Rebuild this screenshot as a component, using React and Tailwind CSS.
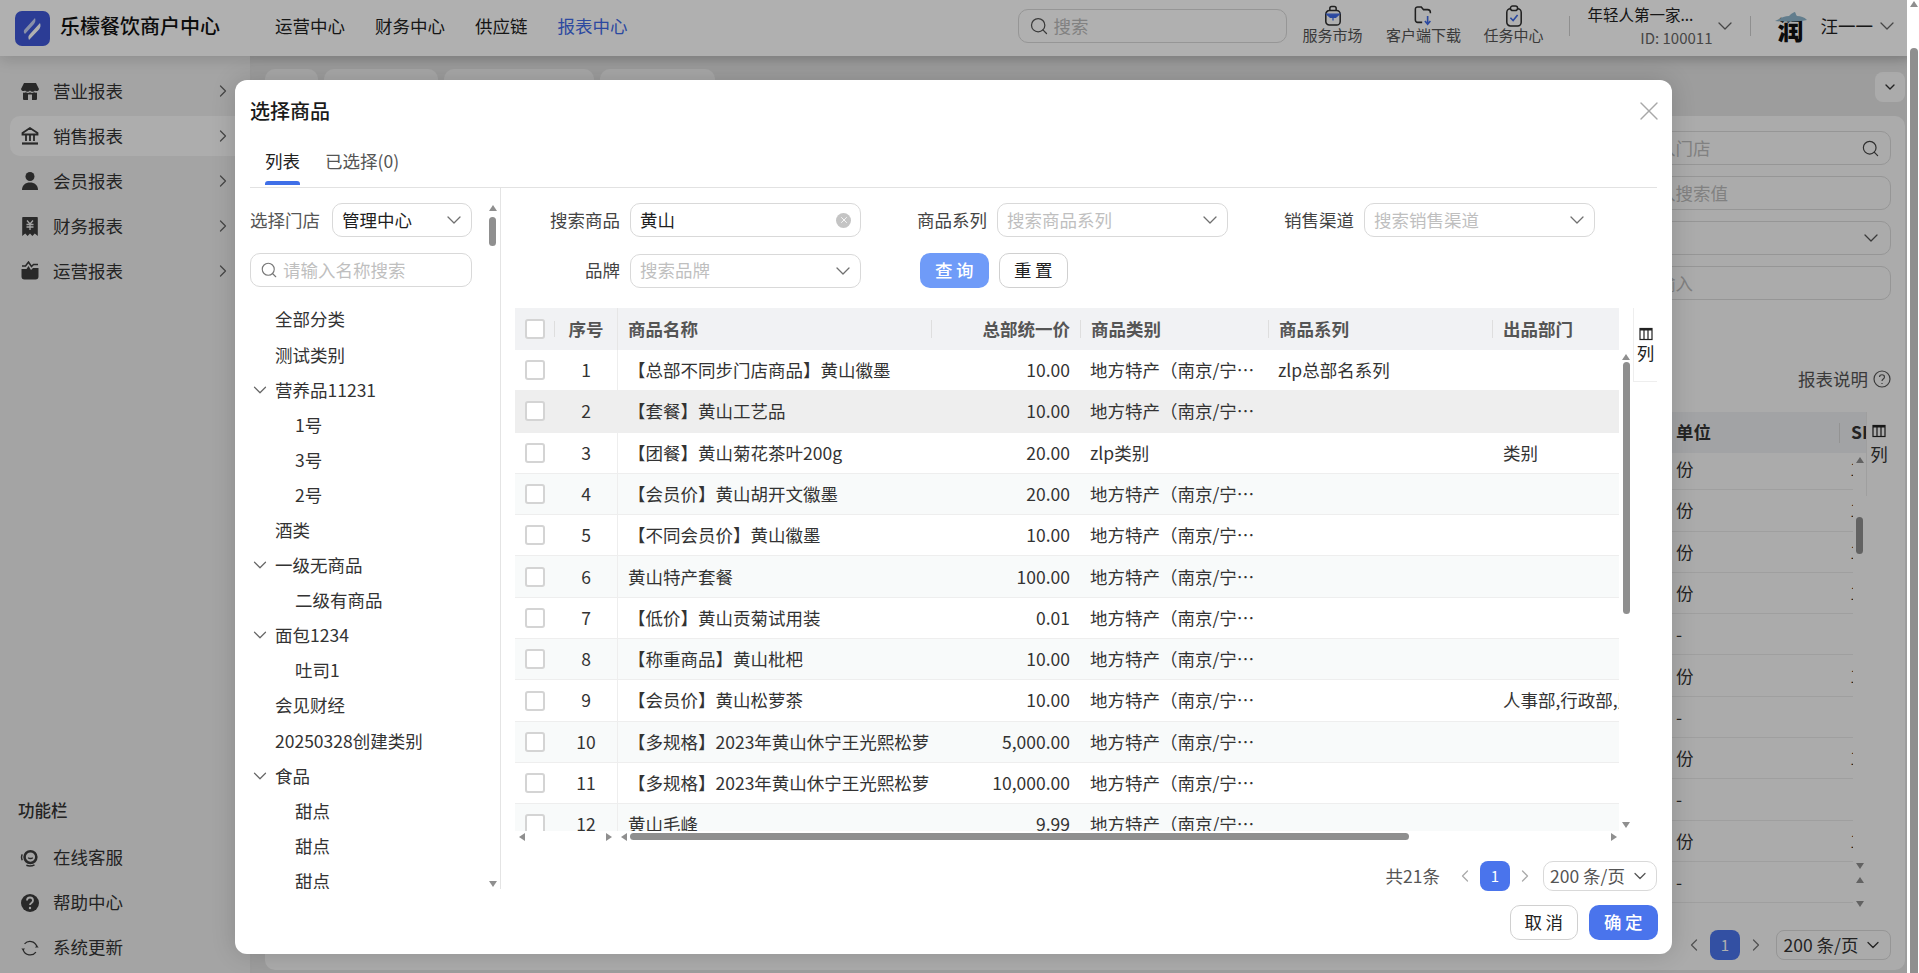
import React from 'react';
import { ChevronDown, ChevronRight, ChevronLeft, Search, X } from 'lucide-react';

const navItems = [
  { label: '运营中心', className: 'ml-[25px]' },
  { label: '财务中心', className: 'ml-[30px]' },
  { label: '供应链', className: 'ml-[30px]' },
  { label: '报表中心', className: 'ml-[30px] text-[#3f6ae8]' },
];

const StoreIcon = () => (
  <svg width="20" height="20" viewBox="0 0 20 20" fill="#3c3c3c">
    <path d="M4 2h12l3 6a2.4 2.4 0 0 1-4 1.4 3 3 0 0 1-5 0 3 3 0 0 1-5 0A2.4 2.4 0 0 1 1 8z" />
    <path d="M3 11.500c1 .4 2 .3 3-.2 1.200.8 2.800.8 4 0 1.200.8 2.800.8 4 0 1 .5 2 .6 3 .2V18a1 1 0 0 1-1 1H4a1 1 0 0 1-1-1z" />
    <rect x="8" y="13.500" width="4" height="5.500" fill="#eee" />
  </svg>
);

const BankIcon = () => (
  <svg width="20" height="20" viewBox="0 0 20 20" fill="none" stroke="#3c3c3c" strokeWidth="1.800">
    <path d="M10 2 2.500 7v1.500h15V7z" />
    <path d="M6 9v6M10 9v6M14 9v6" />
    <path d="M2 17.500h16" strokeWidth="2.200" />
  </svg>
);

const UserIcon = () => (
  <svg width="20" height="20" viewBox="0 0 20 20" fill="#3c3c3c">
    <circle cx="10" cy="5.500" r="4.500" />
    <path d="M2 19c0-5 3.500-7.500 8-7.500s8 2.500 8 7.500z" />
  </svg>
);

const ReceiptIcon = () => (
  <svg width="20" height="20" viewBox="0 0 20 20" fill="#3c3c3c">
    <path d="M3 1h14a.8.8 0 0 1 .8.8V20l-3-2.500-2.400 2.500L10 17.500 7.600 20l-2.400-2.500-3 2.500V1.800A.8.8 0 0 1 3 1z" />
    <path d="M7 4.500 10 8l3-3.500M6.500 8.500h7M6.500 11h7M10 8v6" stroke="#eee" strokeWidth="1.300" fill="none" />
  </svg>
);

const OpsIcon = () => (
  <svg width="20" height="20" viewBox="0 0 20 20" fill="#3c3c3c">
    <path d="M1.500 8h5l2-3 2.500 4 2-2h5.500v8.500a3 3 0 0 1-3 3h-11a3 3 0 0 1-3-3z" />
    <path d="M2 5h3.500L8.500 1l3 4.500L13.500 3.500H18" stroke="#3c3c3c" strokeWidth="1.500" fill="none" />
  </svg>
);

const ServiceIcon = () => (
  <svg width="22" height="20" viewBox="0 0 22 20" fill="none" stroke="#3c3c3c">
    <circle cx="11.500" cy="9" r="6.500" strokeWidth="2.800" />
    <path d="M2.500 6C1.500 8 1.500 10.500 2.500 12.500M7 18c3 1.200 6 1 9-.5" strokeWidth="1.600" />
    <path d="M9 9.500c1 1.400 4 1.400 5 0" strokeWidth="1.400" />
  </svg>
);

const HelpIcon = () => (
  <svg width="20" height="20" viewBox="0 0 20 20">
    <circle cx="10" cy="10" r="9" fill="#3c3c3c" />
    <path d="M7 7.500c0-4 6-4 6 0 0 2.500-3 2.300-3 4.500" stroke="#eee" strokeWidth="1.800" fill="none" />
    <circle cx="10" cy="15" r="1.200" fill="#eee" />
  </svg>
);

const UpdateIcon = () => (
  <svg width="22" height="20" viewBox="0 0 22 20" fill="none" stroke="#3c3c3c" strokeWidth="1.400">
    <path d="M5 5.500A8 8 0 0 1 18.500 8" />
    <path d="M17.500 14.500A8 8 0 0 1 3.500 12" />
    <path d="m1.500 10.500 2 2.500 2-2.500M20.500 9.500l-2-2.500-2 2.500" fill="#3c3c3c" stroke="none" />
  </svg>
);

const BagIcon = () => (
  <svg className="-mt-[3px] -mb-[2px]" width="18" height="22" viewBox="0 0 20 24" fill="none" stroke="#2f2f2f" strokeWidth="1.700">
    <rect x="2" y="6" width="16" height="16" rx="4" />
    <path d="M6.500 6V3.500a2 2 0 0 1 2-2h3a2 2 0 0 1 2 2V6" />
    <path d="M3 10h14l-4 3.500H7zM10 13v4" stroke="#3f6ae8" fill="#3f6ae8" strokeWidth="1.400" />
  </svg>
);

const FolderIcon = () => (
  <svg className="-mt-[3px] -mb-[2px]" width="20" height="22" viewBox="0 0 22 24" fill="none" stroke="#2f2f2f" strokeWidth="1.700">
    <path d="M9 19H4a2.500 2.500 0 0 1-2.500-2.500v-12A2.500 2.500 0 0 1 4 2h4l2.500 3H15a3 3 0 0 1 3 3v1" />
    <path d="M15 12v8M12 17.500l3 3.500 3-3.500" stroke="#3f6ae8" strokeWidth="1.800" />
  </svg>
);

const ClipIcon = () => (
  <svg className="-mt-[3px] -mb-[2px]" width="18" height="22" viewBox="0 0 20 24" fill="none" stroke="#2f2f2f" strokeWidth="1.700">
    <rect x="2" y="4" width="16" height="19" rx="4" />
    <rect x="6" y="1" width="8" height="5" rx="2.500" fill="#fff" />
    <path d="m6 14 3 3 5-6" stroke="#3f6ae8" strokeWidth="1.800" />
  </svg>
);

const ColumnIcon = ({ className }) => (
  <svg className={className} width="14" height="14" viewBox="0 0 14 14" fill="none" stroke="#222" strokeWidth="1.200">
    <rect x="1" y="1.500" width="12" height="11" />
    <path d="M1 2.500h12" strokeWidth="2" />
    <path d="M5 2v10M9 2v10" />
  </svg>
);

const sideItems = [
  { label: '营业报表', icon: <StoreIcon /> },
  { label: '销售报表', icon: <BankIcon />, active: true },
  { label: '会员报表', icon: <UserIcon /> },
  { label: '财务报表', icon: <ReceiptIcon /> },
  { label: '运营报表', icon: <OpsIcon /> },
];

const toolItems = [
  { label: '在线客服', icon: <ServiceIcon /> },
  { label: '帮助中心', icon: <HelpIcon /> },
  { label: '系统更新', icon: <UpdateIcon /> },
];

const tree = [
  { label: '全部分类', level: 0 },
  { label: '测试类别', level: 0 },
  { label: '营养品11231', level: 0, open: true },
  { label: '1号', level: 1 },
  { label: '3号', level: 1 },
  { label: '2号', level: 1 },
  { label: '酒类', level: 0 },
  { label: '一级无商品', level: 0, open: true },
  { label: '二级有商品', level: 1 },
  { label: '面包1234', level: 0, open: true },
  { label: '吐司1', level: 1 },
  { label: '会见财经', level: 0 },
  { label: '20250328创建类别', level: 0 },
  { label: '食品', level: 0, open: true },
  { label: '甜点', level: 1 },
  { label: '甜点', level: 1 },
  { label: '甜点', level: 1 },
];

const cat = '地方特产（南京/宁波）';
const rows = [
  { name: '【总部不同步门店商品】黄山徽墨', price: '10.00', cat, series: 'zlp总部名系列' },
  { name: '【套餐】黄山工艺品', price: '10.00', cat },
  { name: '【团餐】黄山菊花茶叶200g', price: '20.00', cat: 'zlp类别', dept: '类别' },
  { name: '【会员价】黄山胡开文徽墨', price: '20.00', cat },
  { name: '【不同会员价】黄山徽墨', price: '10.00', cat },
  { name: '黄山特产套餐', price: '100.00', cat },
  { name: '【低价】黄山贡菊试用装', price: '0.01', cat },
  { name: '【称重商品】黄山枇杷', price: '10.00', cat },
  { name: '【会员价】黄山松萝茶', price: '10.00', cat, dept: '人事部,行政部,财务部' },
  { name: '【多规格】2023年黄山休宁王光熙松萝', price: '5,000.00', cat },
  { name: '【多规格】2023年黄山休宁王光熙松萝', price: '10,000.00', cat },
  { name: '黄山毛峰', price: '9.99', cat },
];

const bgUnits = ['份', '份', '份', '份', '-', '份', '-', '份', '-', '份', '-'];

const Arrow = ({ dir }) => {
  const cls = {
    up: 'border-x-[4px] border-x-transparent border-b-[6px] border-b-[#8f8f8f]',
    down: 'border-x-[4px] border-x-transparent border-t-[6px] border-t-[#8f8f8f]',
    left: 'border-y-[4px] border-y-transparent border-r-[6px] border-r-[#8f8f8f]',
    right: 'border-y-[4px] border-y-transparent border-l-[6px] border-l-[#8f8f8f]',
  }[dir];
  return <span className={`block w-0 h-0 ${cls}`} />;
};

const Checkbox = () => (
  <span className="block w-[20px] h-[20px] rounded-[3px] border-2 border-[#d4d4d4] bg-white" />
);

const Field = ({ placeholder, value, clear, className }) => (
  <div className={`h-[34px] flex items-center rounded-[10px] border border-[#d9d9d9] bg-white pl-[9px] pr-[9px] ${className}`}>
    <span className={`flex-1 truncate ${value ? 'text-[#1f1f1f]' : 'text-[#bfbfbf]'}`}>{value || placeholder}</span>
    {clear ? (
      <span className="w-[15px] h-[15px] rounded-full bg-[#c4c4c4] flex items-center justify-center">
        <X size={10} color="#fff" strokeWidth={2} />
      </span>
    ) : (
      <ChevronDown size={24} color="#707070" strokeWidth={1.300} className="-mr-[4px]" />
    )}
  </div>
);

const App = () => {
  return (
    <div className="relative w-[1919px] h-[973px] overflow-hidden flex font-['Noto_Sans_CJK_SC','Noto_Sans',sans-serif] text-[17.5px] text-[#222]">
      <div className="w-[1908px] flex flex-col bg-[#e4e4e4]">
        {/* top bar */}
        <header className="h-[56px] pb-[4px] bg-white flex items-center shrink-0 relative z-10 shadow-[0_4px_14px_rgba(0,0,0,0.14)]">
          <svg className="ml-[15px] mt-[4px]" width="35" height="35" viewBox="0 0 35 35">
            <rect width="35" height="35" rx="7" fill="#3f58d8" />
            <path d="M20 7 10 18c-2 2-1 4 0 5l9-10c1-1.500 2-3.500 1-6z" fill="#c6d0f4" />
            <path d="M25 12 15 23c-2 2-2 3.500-1 6l10-10.500c1.500-2 2-4 1-6.500z" fill="#ffffff" />
          </svg>
          <span className="ml-[10px] text-[20px] font-medium w-[160px] text-[#111] whitespace-nowrap">乐檬餐饮商户中心</span>
          <nav className="flex items-center ml-[30px]">
            {navItems.map((n) => (
              <span key={n.label} className={n.className}>{n.label}</span>
            ))}
          </nav>
          <div className="ml-[390px] w-[269px] h-[34px] rounded-[10px] border border-[#d9d9d9] flex items-center px-[10px] text-[#bbb]">
            <Search size={20} color="#555" strokeWidth={1.500} />
            <span className="ml-[5px]">搜索</span>
          </div>
          <div className="ml-[16px] w-[60px] flex flex-col items-center text-[15px] text-[#555] leading-[20px]">
            <BagIcon />
            <span className="whitespace-nowrap">服务市场</span>
          </div>
          <div className="ml-[23px] w-[76px] flex flex-col items-center text-[15px] text-[#555] leading-[20px]">
            <FolderIcon />
            <span className="whitespace-nowrap">客户端下载</span>
          </div>
          <div className="ml-[22px] w-[60px] flex flex-col items-center text-[15px] text-[#555] leading-[20px]">
            <ClipIcon />
            <span className="whitespace-nowrap">任务中心</span>
          </div>
          <span className="ml-[25px] w-px h-[20px] bg-[#cfcfcf]" />
          <div className="ml-[18px] w-[125px] flex flex-col text-[15.500px]">
            <span className="leading-[24px] whitespace-nowrap">年轻人第一家...</span>
            <span className="text-right text-[#666] text-[15px] leading-[24px]">ID: 100011</span>
          </div>
          <ChevronDown size={24} color="#666" strokeWidth={1.300} />
          <span className="ml-[13px] w-px h-[20px] bg-[#cfcfcf]" />
          <div className="ml-[21px] w-[38px] h-[34px] relative flex items-end justify-center">
            <svg className="absolute top-[2px] left-[2px]" width="34" height="12" viewBox="0 0 34 12">
              <path d="M1 10c6-3 9-5 14-5 3-3 5-4 6-4 1 2 1 3 2 4 4 0 7 1 10 4-8 2-24 2-32 1z" fill="#8fb6cc" />
            </svg>
            <span className="text-[26px] leading-[28px] font-black text-[#111]">润</span>
          </div>
          <span className="ml-[11px] w-[52px] whitespace-nowrap">汪一一</span>
          <ChevronDown size={24} color="#666" strokeWidth={1.300} className="ml-[2px]" />
        </header>

        <div className="flex-1 flex min-h-0">
          {/* side menu */}
          <aside className="w-[250px] shrink-0 bg-[#eeeeee] flex flex-col pt-[15px] pb-[3px] text-[#333]">
            {sideItems.map((s) => (
              <div
                key={s.label}
                className={`h-[40px] mb-[5px] ml-[10px] flex items-center rounded-[10px] pl-[10px] ${s.active ? 'bg-[#fbfbfb]' : ''}`}
              >
                <span className="w-[20px] flex justify-center">{s.icon}</span>
                <span className="ml-[13px] w-[160px]">{s.label}</span>
                <ChevronRight size={20} color="#666" strokeWidth={1.500} />
              </div>
            ))}
            <div className="mt-auto pl-[18px] text-[#333] font-medium text-[16.500px] mb-[12px]">功能栏</div>
            {toolItems.map((t) => (
              <div key={t.label} className="h-[45px] flex items-center pl-[20px]">
                <span className="w-[20px] flex justify-center">{t.icon}</span>
                <span className="ml-[13px]">{t.label}</span>
              </div>
            ))}
          </aside>

          {/* main area behind the dialog */}
          <main className="flex-1 min-w-0 flex flex-col pl-[15px] pr-[3px] text-[#333] shadow-[inset_0_8px_10px_-6px_rgba(0,0,0,0.12)]">
            <div className="h-[60px] pt-[13px] flex items-start shrink-0">
              {[['首页', 'w-[53px]'], ['经营配置', 'w-[114px]'], ['商品销售汇总', 'w-[150px]'], ['商品类别', 'w-[115px]']].map(([t, w], i) => (
                <span key={t} className={`${w} h-[36px] rounded-[10px] bg-[#f4f4f4] flex items-center justify-center text-[15px] ${i > 0 ? 'ml-[6px]' : ''}`}>{t}</span>
              ))}
              <span className="ml-auto mt-[3px] w-[30px] h-[30px] rounded-[8px] bg-[#f8f8f8] flex items-center justify-center">
                <ChevronDown size={16} color="#333" strokeWidth={2} />
              </span>
            </div>
            <section className="flex-1 rounded-[10px] bg-[#f8f8f8] pr-[14px] flex flex-col items-end pt-[15px] mb-[3px]">
              {['请输入门店', '请输入搜索值', '', '请先输入'].map((t, i) => (
                <div key={i} className="w-[400px] h-[34px] mb-[11px] rounded-[10px] border border-[#d9d9d9] flex items-center justify-between pl-[131px] pr-[10px] text-[#bbb] whitespace-nowrap">
                  <span>{t}</span>
                  {i === 0 && <Search size={19} color="#444" strokeWidth={1.500} />}
                  {i === 2 && <ChevronDown size={24} color="#555" strokeWidth={1.300} className="-mr-[3px]" />}
                </div>
              ))}
              <div className="mt-[57px] h-[22px] flex items-center gap-[5px] text-[#555]">
                报表说明
                <svg width="18" height="18" viewBox="0 0 18 18" fill="none" stroke="#555" strokeWidth="1.200">
                  <circle cx="9" cy="9" r="8" />
                  <path d="M6.500 7c0-3 5-3 5 0 0 2-2.500 2-2.500 4M9 13v1" />
                </svg>
              </div>
              <div className="mt-[22px] w-[600px] flex-1 min-h-0 flex relative">
                <div className="flex-1 flex flex-col min-w-0 overflow-hidden">
                  <div className="h-[41px] shrink-0 bg-[#ebedf0] flex items-center font-bold pl-[385px] overflow-hidden">
                    <span className="w-[163px] shrink-0">单位</span>
                    <span className="w-px h-[20px] bg-[#d5d5d5] shrink-0" />
                    <span className="ml-[11px] shrink-0">SKU</span>
                  </div>
                  <div className="flex-1 overflow-hidden -mt-[4px]">
                    {bgUnits.map((u, i) => (
                      <div key={i} className="h-[41.300px] pl-[385px] flex items-center border-b border-[#e6e6e6]">
                        <span className="w-[174px] shrink-0">{u}</span>
                        <span>{u === '份' ? '1' : ''}</span>
                      </div>
                    ))}
                  </div>
                </div>
                <div className="absolute right-[25px] top-[41px] bottom-0 w-[13px] bg-[#f8f8f8] flex flex-col items-center pt-[4px]">
                  <Arrow dir="up" />
                  <span className="mt-[54px] w-[7px] h-[37px] rounded-full bg-[#8f8f8f]" />
                  <span className="mt-auto mb-[8px] block"><Arrow dir="down" /></span>
                  <Arrow dir="up" />
                  <span className="mt-[18px] mb-[13px] block"><Arrow dir="down" /></span>
                </div>
                <div className="w-[25px] shrink-0 border-l border-[#e6e6e6] flex flex-col items-center h-[84px]">
                  <ColumnIcon className="mt-[12px]" />
                  <span className="mt-[3px]">列</span>
                </div>
              </div>
              <div className="h-[50px] flex items-center shrink-0 gap-[6px]">
                <ChevronLeft size={20} color="#777" strokeWidth={1.500} />
                <span className="w-[30px] h-[30px] rounded-[8px] bg-[#4a74ec] text-white flex items-center justify-center text-[15px]">1</span>
                <ChevronRight size={20} color="#777" strokeWidth={1.500} />
                <span className="ml-[4px] w-[115px] h-[30px] rounded-[8px] border border-[#d9d9d9] flex items-center justify-center gap-[5px]">
                  200 条/页 <ChevronDown size={20} strokeWidth={1.500} />
                </span>
              </div>
            </section>
          </main>
        </div>
      </div>

      <div className="w-[11px] bg-white shrink-0" />

      {/* mask */}
      <div className="absolute inset-0 z-20 bg-black/[0.31]" />

      {/* page scrollbar stays light above the mask */}
      <div className="absolute z-30 right-0 top-0 bottom-0 w-[12px] flex flex-col items-center bg-white">
        <span className="mt-[1px] ml-[2px]"><Arrow dir="up" /></span>
        <span className="mt-[41px] ml-[2px] w-[8px] flex-1 rounded-t-full bg-[#8f8f8f]" />
      </div>

      {/* dialog */}
      <div className="absolute z-30 left-[235px] top-[80px] w-[1437px] h-[874px] rounded-[12px] bg-white px-[15px] flex flex-col shadow-[0_0_24px_rgba(0,0,0,0.16)]">
        <div className="h-[61px] shrink-0 flex items-center justify-between">
          <span className="text-[20px] font-medium text-[#1a1a1a]">选择商品</span>
          <X size={32} color="#a8a8a8" strokeWidth={1} className="-mr-[8px]" />
        </div>

        <div className="h-[47px] shrink-0 border-b border-[#e2e2e2] flex items-center pb-[7px]">
          <span className="ml-[15px] relative h-[24px] leading-[24px]">
            列表
            <span className="absolute left-0 right-0 top-[32px] h-[4px] rounded-t-[3px] bg-[#3f6fe8]" />
          </span>
          <span className="ml-[25px] leading-[24px] text-[#555]">已选择(0)</span>
        </div>

        <div className="h-[701px] shrink-0 flex">
          {/* category tree */}
          <div className="w-[251px] shrink-0 border-r border-[#e4e4e4] relative flex flex-col">
            <div className="pt-[15px] w-[222px] shrink-0">
              <div className="flex items-center justify-between">
                <span className="text-[#555]">选择门店</span>
                <Field value="管理中心" className="w-[140px]" />
              </div>
              <div className="mt-[16px] h-[34px] flex items-center rounded-[10px] border border-[#d9d9d9] px-[9px] text-[#bfbfbf]">
                <Search size={18} color="#777" strokeWidth={1.500} />
                <span className="ml-[5px]">请输入名称搜索</span>
              </div>
            </div>
            <div className="flex-1 min-h-0 overflow-hidden mt-[15px]">
              {tree.map((t, i) => (
                <div key={i} className={`h-[35.100px] flex items-center text-[#333] ${t.level ? 'pl-[45px]' : 'pl-[25px]'}`}>
                  {t.open && <ChevronDown size={22} color="#666" strokeWidth={1.300} className="-ml-[26px] mr-[4px]" />}
                  {t.label}
                </div>
              ))}
            </div>
            <div className="absolute right-[3px] top-[17px] bottom-0 w-[9px] flex flex-col items-center">
              <Arrow dir="up" />
              <span className="mt-[6px] w-[7px] h-[29px] rounded-full bg-[#8f8f8f]" />
              <span className="mt-auto mb-[2px] block"><Arrow dir="down" /></span>
            </div>
          </div>

          <div className="flex-1 min-w-0 pl-[14px] flex flex-col">
            {/* filters */}
            <div className="pt-[15px] shrink-0 grid grid-cols-[115px_231px_136px_231px_136px_231px] gap-y-[16px] items-center">
              <span className="pr-[10px] text-right text-[#444]">搜索商品</span>
              <Field value="黄山" clear />
              <span className="pr-[10px] text-right text-[#444]">商品系列</span>
              <Field placeholder="搜索商品系列" />
              <span className="pr-[10px] text-right text-[#444]">销售渠道</span>
              <Field placeholder="搜索销售渠道" />
              <span className="pr-[10px] text-right text-[#444]">品牌</span>
              <Field placeholder="搜索品牌" />
              <div className="col-span-4 flex pl-[59px] gap-[10px]">
                <span className="w-[69px] h-[35px] rounded-[10px] bg-[#6f9bf8] text-white flex items-center justify-center tracking-[0.2em] pl-[3px] font-medium">查询</span>
                <span className="w-[69px] h-[35px] rounded-[10px] border border-[#d0d0d0] flex items-center justify-center tracking-[0.2em] pl-[3px]">重置</span>
              </div>
            </div>

            {/* goods table */}
            <div className="mt-[20px] h-[534px] shrink-0 flex relative">
              <div className="w-[1104px] flex flex-col shrink-0">
                <div className="h-[42px] shrink-0 bg-[#f1f2f4] grid grid-cols-[40px_62px_314px_149px_188px_224px_127px] items-center font-bold text-[#555]">
                  <span className="flex items-center justify-center relative">
                    <Checkbox />
                    <span className="absolute right-0 w-px h-[16px] bg-[#dedede]" />
                  </span>
                  <span className="text-center">序号</span>
                  <span className="h-full flex items-center pl-[10px] border-l border-[#e6e6e6]">商品名称</span>
                  <span className="h-[18px] flex items-center justify-end pr-[10px] border-l border-[#dedede] leading-none">总部统一价</span>
                  <span className="h-[18px] flex items-center pl-[10px] border-l border-[#dedede] leading-none">商品类别</span>
                  <span className="h-[18px] flex items-center pl-[10px] border-l border-[#dedede] leading-none">商品系列</span>
                  <span className="h-[18px] flex items-center pl-[10px] border-l border-[#dedede] leading-none">出品部门</span>
                </div>
                <div className="h-[481px] overflow-hidden">
                  {rows.map((r, i) => (
                    <div
                      key={i}
                      className={`h-[41.300px] grid grid-cols-[40px_62px_314px_149px_188px_224px_127px] items-center border-b border-[#eeeeee] text-[#333] ${i === 1 ? 'bg-[#eeeeee]' : i % 2 === 1 ? 'bg-[#f8fafa]' : 'bg-white'}`}
                    >
                      <span className="flex justify-center"><Checkbox /></span>
                      <span className="text-center">{i + 1}</span>
                      <span className="h-full flex items-center pl-[10px] border-l border-[#eeeeee] whitespace-nowrap">{r.name}</span>
                      <span className="text-right pr-[10px]">{r.price}</span>
                      <span className="pl-[10px] pr-[12px] truncate">{r.cat}</span>
                      <span className="pl-[10px] truncate">{r.series}</span>
                      <span className="pl-[11px] whitespace-nowrap overflow-hidden">{r.dept}</span>
                    </div>
                  ))}
                </div>
                <div className="h-[11px] flex items-center">
                  <span className="ml-[4px]"><Arrow dir="left" /></span>
                  <span className="ml-[81px]"><Arrow dir="right" /></span>
                  <span className="ml-[9px]"><Arrow dir="left" /></span>
                  <span className="ml-[3px] w-[779px] h-[7px] rounded-full bg-[#8f8f8f]" />
                  <span className="ml-[202px]"><Arrow dir="right" /></span>
                </div>
              </div>
              <div className="w-[14px] shrink-0 pt-[46px] flex flex-col items-center">
                <Arrow dir="up" />
                <span className="mt-[2px] w-[7px] h-[252px] rounded-full bg-[#8f8f8f]" />
                <span className="mt-[208px]"><Arrow dir="down" /></span>
              </div>
              <div className="w-[24px] shrink-0 h-[74px] border-l border-b border-[#eeeeee] flex flex-col items-center">
                <ColumnIcon className="mt-[19px]" />
                <span className="leading-[24px]">列</span>
              </div>
            </div>

            {/* pagination */}
            <div className="mt-[19px] h-[30px] shrink-0 flex items-center justify-end text-[#555]">
              <span className="mr-[15px]">共21条</span>
              <ChevronLeft size={20} color="#aaa" strokeWidth={1.500} />
              <span className="mx-[5px] w-[30px] h-[30px] rounded-[8px] bg-[#4a74ec] text-white flex items-center justify-center text-[15px]">1</span>
              <ChevronRight size={20} color="#aaa" strokeWidth={1.500} />
              <span className="ml-[8px] w-[114px] h-[30px] rounded-[10px] border border-[#d9d9d9] flex items-center justify-center gap-[5px] whitespace-nowrap">
                200 条/页 <ChevronDown size={20} strokeWidth={1.500} />
              </span>
            </div>
          </div>
        </div>

        {/* footer */}
        <div className="mt-[16px] flex justify-end gap-[11px] -mr-[1px]">
          <span className="w-[68px] h-[35px] rounded-[10px] border border-[#d0d0d0] flex items-center justify-center tracking-[0.2em] pl-[3px]">取消</span>
          <span className="w-[69px] h-[35px] rounded-[10px] bg-[#4a74ec] text-white flex items-center justify-center tracking-[0.2em] pl-[3px] font-medium">确定</span>
        </div>
      </div>
    </div>
  );
};

export default App;
